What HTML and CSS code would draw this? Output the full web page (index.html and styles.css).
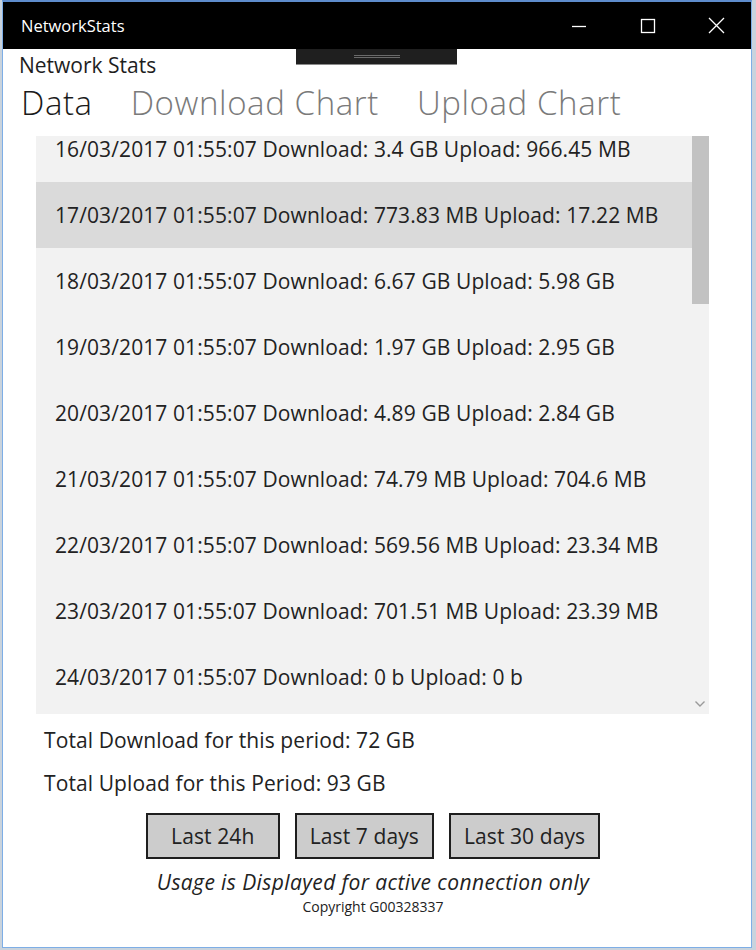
FILE: index.html
```html
<!DOCTYPE html>
<html>
<head>
<meta charset="utf-8">
<link rel="stylesheet" href="styles.css">
</head>
<body>
<div class="window">
  <div class="titlebar">
    <span class="title">NetworkStats</span>
    <div class="caption">
      <span class="cbtn"><svg width="16" height="16" viewBox="0 0 16 16"><line x1="1" y1="8.5" x2="15" y2="8.5" stroke="#fff" stroke-width="1.3"/></svg></span>
      <span class="cbtn"><svg width="16" height="16" viewBox="0 0 16 16"><rect x="1.5" y="1.5" width="13" height="13" fill="none" stroke="#fff" stroke-width="1.3"/></svg></span>
      <span class="cbtn"><svg width="17" height="17" viewBox="0 0 17 17"><path d="M1 1 L16 16 M16 1 L1 16" stroke="#fff" stroke-width="1.3"/></svg></span>
    </div>
  </div>
  <div class="content">
    <div class="grip-tab"><span class="grip"></span></div>
    <div class="app-title">Network Stats</div>
    <div class="pivot">
      <span class="pivot-item active">Data</span>
      <span class="pivot-item">Download Chart</span>
      <span class="pivot-item">Upload Chart</span>
    </div>
    <div class="list">
      <div class="rows">
        <div class="row">16/03/2017 01:55:07 Download: 3.4 GB Upload: 966.45 MB</div>
        <div class="row selected">17/03/2017 01:55:07 Download: 773.83 MB Upload: 17.22 MB</div>
        <div class="row">18/03/2017 01:55:07 Download: 6.67 GB Upload: 5.98 GB</div>
        <div class="row">19/03/2017 01:55:07 Download: 1.97 GB Upload: 2.95 GB</div>
        <div class="row">20/03/2017 01:55:07 Download: 4.89 GB Upload: 2.84 GB</div>
        <div class="row">21/03/2017 01:55:07 Download: 74.79 MB Upload: 704.6 MB</div>
        <div class="row">22/03/2017 01:55:07 Download: 569.56 MB Upload: 23.34 MB</div>
        <div class="row">23/03/2017 01:55:07 Download: 701.51 MB Upload: 23.39 MB</div>
        <div class="row">24/03/2017 01:55:07 Download: 0 b Upload: 0 b</div>
      </div>
      <div class="scroll-thumb"></div>
      <svg class="chevron" width="10" height="6" viewBox="0 0 10 6"><path d="M0.5 0.5 L5 5 L9.5 0.5" fill="none" stroke="#9a9a9a" stroke-width="1.4"/></svg>
    </div>
    <div class="totals">
      <div class="total">Total Download for this period: 72 GB</div>
      <div class="total">Total Upload for this Period: 93 GB</div>
    </div>
    <div class="footer">
      <div class="buttons">
        <button class="btn">Last 24h</button>
        <button class="btn">Last 7 days</button>
        <button class="btn">Last 30 days</button>
      </div>
      <div class="note">Usage is Displayed for active connection only</div>
      <div class="copyright">Copyright G00328337</div>
    </div>
  </div>
</div>
</body>
</html>
```

FILE: styles.css
```css
html, body {
  margin: 0;
  padding: 0;
}
body {
  background: #c9d3dd;
  font-family: "Open Sans", "Noto Sans", sans-serif;
  color: #1e1e1e;
  width: 756px;
  height: 950px;
  overflow: hidden;
}
.window {
  margin-left: 2px;
  width: 750px;
  height: 948px;
  box-sizing: border-box;
  border: 1px solid #7eaee6;
  border-top: 2px solid #5e8ccc;
  background: #ffffff;
  display: flex;
  flex-direction: column;
}
.titlebar {
  height: 47px;
  flex: none;
  background: #000;
  display: flex;
  align-items: center;
}
.title {
  color: #fff;
  font-size: 16.5px;
  padding-left: 18px;
}
.caption {
  margin-left: auto;
  display: flex;
  height: 100%;
}
.cbtn {
  width: 69px;
  display: flex;
  align-items: center;
  justify-content: center;
}
.content {
  position: relative;
  flex: 1;
  display: flex;
  flex-direction: column;
}
.grip-tab {
  position: absolute;
  left: 293px;
  top: 0;
  width: 161px;
  height: 15px;
  background: #1f1f1f;
  border-bottom: 1px solid #8a8a8a;
  display: flex;
  justify-content: center;
  align-items: center;
  z-index: 2;
}
.grip {
  width: 46px;
  height: 1px;
  border-top: 1px solid #6a6a6a;
  border-bottom: 1px solid #6a6a6a;
}
.app-title {
  font-size: 21px;
  line-height: 26px;
  padding: 3px 0 0 16px;
}
.pivot {
  display: flex;
  gap: 38px;
  padding-left: 18px;
  font-size: 33px;
  font-weight: 300;
  line-height: 46px;
  margin-top: 2px;
  letter-spacing: 0.6px;
}
.pivot-item {
  color: #7a7a7a;
  white-space: nowrap;
}
.pivot-item.active {
  color: #1a1a1a;
}
.list {
  position: relative;
  margin: 10px 0 0 33px;
  width: 673px;
  height: 578px;
  flex: none;
  background: #f2f2f2;
  overflow: hidden;
}
.rows {
  margin-top: -20px;
}
.row {
  height: 66px;
  line-height: 66px;
  padding-left: 19px;
  font-size: 21px;
  color: #222;
  letter-spacing: 0.1px;
  white-space: nowrap;
}
.row.selected {
  background: #dadada;
}
.scroll-thumb {
  position: absolute;
  right: 0;
  top: 0;
  width: 17px;
  height: 168px;
  background: #c2c2c2;
}
.chevron {
  position: absolute;
  right: 4px;
  bottom: 7px;
}
.totals {
  padding-left: 41px;
  margin-top: 5px;
}
.total {
  font-size: 21px;
  line-height: 43px;
  letter-spacing: 0.1px;
  color: #222;
  white-space: nowrap;
}
.footer {
  display: flex;
  flex-direction: column;
  align-items: center;
  padding-right: 8px;
  margin-top: 8px;
}
.buttons {
  display: flex;
  gap: 15px;
}
.btn {
  font-family: inherit;
  font-size: 21px;
  letter-spacing: 0.1px;
  color: #222;
  background: #cccccc;
  border: 2px solid #1e1e1e;
  height: 46px;
  min-width: 134px;
  box-sizing: border-box;
  padding: 0 13px;
  margin: 0;
}
.note {
  font-size: 21px;
  font-style: italic;
  letter-spacing: 0.4px;
  color: #222;
  margin-top: 8px;
  line-height: 30px;
}
.copyright {
  font-size: 14px;
  color: #222;
  line-height: 20px;
  margin-top: 0;
}
```
